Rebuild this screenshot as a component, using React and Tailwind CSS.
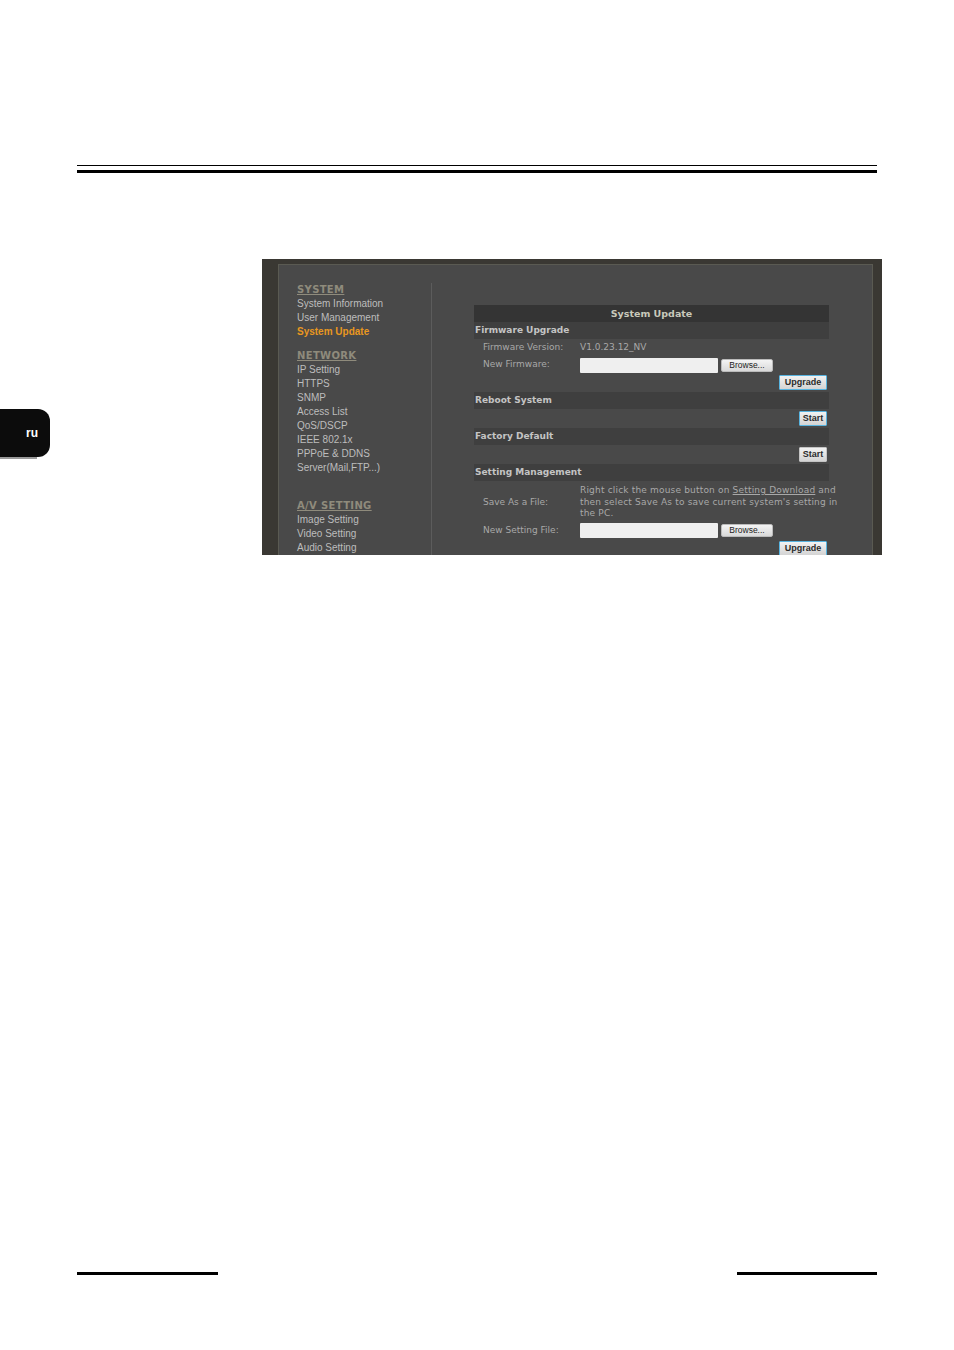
import React from "react";

const navFont = "font-['Liberation_Sans',Arial,sans-serif]";
const tableFont = "font-['DejaVu_Sans',Verdana,sans-serif]";

const NavHeading = ({ children, className = "" }) => (
  <div className={`h-[14px] text-[10px] leading-[14px] font-bold tracking-[0.35px] underline text-[#8f8b7c] ${tableFont} ${className}`}>
    {children}
  </div>
);

const NavItem = ({ children, active }) => (
  <div className={`h-[14px] text-[10px] leading-[14px] ${navFont} ${active ? "font-bold text-[#e8971f]" : "text-[#bdbdbd]"}`}>
    {children}
  </div>
);

const SectionRow = ({ children }) => (
  <div className={`h-[17px] bg-[#3f3f3f] pl-px text-[9px] leading-[17px] font-bold text-[#c4c4c4] ${tableFont}`}>
    {children}
  </div>
);

const FormRow = ({ label, children, className = "" }) => (
  <div className={`flex items-center text-[9px] text-[#a8a8a8] ${tableFont} ${className}`}>
    <div className="w-[106px] pl-[9px] shrink-0">{label}</div>
    {children}
  </div>
);

const FileInput = () => (
  <div className="flex items-center">
    <div className="w-[138px] h-[15px] bg-[#efefef] rounded-[1px]" />
    <div className={`ml-[3px] w-[52px] h-[13px] bg-gradient-to-b from-[#f4f4f4] to-[#d9d9d9] border border-[#bbbbbb] rounded-[2px] text-center text-[8.5px] leading-[11px] text-[#222] ${navFont}`}>
      Browse...
    </div>
  </div>
);

const ActionButton = ({ label, width, focused }) => (
  <div
    className={`${width} h-[15px] bg-gradient-to-b from-[#f2f2f2] to-[#d4d4d4] rounded-[1px] border text-center text-[9px] leading-[13px] font-bold text-[#2b2b2b] ${navFont} ${
      focused ? "border-[#58b4e0]" : "border-[#c4c4c4]"
    }`}
  >
    {label}
  </div>
);

const ButtonRow = ({ height, children }) => (
  <div className={`${height} flex justify-end items-center pr-[2px]`}>{children}</div>
);

const Sidebar = () => (
  <div className="w-[153px] shrink-0 border-r border-[#5c5c5c] pl-[18px] pt-[-1px] h-full">
    <NavHeading>SYSTEM</NavHeading>
    <NavItem>System Information</NavItem>
    <NavItem>User Management</NavItem>
    <NavItem active>System Update</NavItem>
    <NavHeading className="mt-[10px]">NETWORK</NavHeading>
    <NavItem>IP Setting</NavItem>
    <NavItem>HTTPS</NavItem>
    <NavItem>SNMP</NavItem>
    <NavItem>Access List</NavItem>
    <NavItem>QoS/DSCP</NavItem>
    <NavItem>IEEE 802.1x</NavItem>
    <NavItem>PPPoE &amp; DDNS</NavItem>
    <NavItem>Server(Mail,FTP...)</NavItem>
    <NavHeading className="mt-[24px]">A/V SETTING</NavHeading>
    <NavItem>Image Setting</NavItem>
    <NavItem>Video Setting</NavItem>
    <NavItem>Audio Setting</NavItem>
  </div>
);

const UpdateTable = () => (
  <div className="w-[355px] ml-[42px] mt-[22px] shrink-0">
    <div className={`h-[17px] bg-[#343434] text-center pl-[0px] text-[9.5px] leading-[17px] font-bold text-[#c9c9bb] ${tableFont}`}>
      System Update
    </div>
    <SectionRow>Firmware Upgrade</SectionRow>
    <FormRow label="Firmware Version:" className="h-[18px]">
      <span>V1.0.23.12_NV</span>
    </FormRow>
    <FormRow label="New Firmware:" className="h-[16px]">
      <FileInput />
    </FormRow>
    <ButtonRow height="h-[19px]">
      <ActionButton label="Upgrade" width="w-[48px]" focused />
    </ButtonRow>
    <SectionRow>Reboot System</SectionRow>
    <ButtonRow height="h-[19px]">
      <ActionButton label="Start" width="w-[28px]" focused />
    </ButtonRow>
    <SectionRow>Factory Default</SectionRow>
    <ButtonRow height="h-[19px]">
      <ActionButton label="Start" width="w-[28px]" />
    </ButtonRow>
    <SectionRow>Setting Management</SectionRow>
    <FormRow label="Save As a File:" className="h-[41px] pt-[2px]">
      <p className="w-[249px] leading-[11.7px] tracking-[0.02em] whitespace-nowrap">
        Right click the mouse button on <span className="underline">Setting Download</span> and
        <br />
        then select Save As to save current system's setting in
        <br />
        the PC.
      </p>
    </FormRow>
    <FormRow label="New Setting File:" className="h-[17px]">
      <FileInput />
    </FormRow>
    <ButtonRow height="h-[19px]">
      <ActionButton label="Upgrade" width="w-[48px]" focused />
    </ButtonRow>
  </div>
);

export default function App() {
  return (
    <div className="w-[954px] h-[1350px] bg-white overflow-hidden">
      <div className="pt-[165px] px-[77px]">
        <div className="h-px bg-black" />
        <div className="mt-[4px] h-[3px] bg-black" />
      </div>

      <div className="mt-[86px] flex">
        <div className="w-[262px] shrink-0">
          <div className="mt-[150px] w-[50px] h-[48px] bg-[#0c0c0c] rounded-r-[12px] flex items-center justify-end pr-[12px] text-white text-[12px] font-bold font-['Liberation_Sans',Arial,sans-serif]">
            ru
          </div>
          <div className="w-[37px] h-[2px] bg-[#9a9a9a]" />
        </div>

        <div className="w-[620px] h-[296px] bg-[#3a3833] pt-[5px] px-[16px] pr-[9px] overflow-hidden">
          <div className="h-[320px] bg-[#494949] border-l border-t border-r border-[#5a5a52] flex pt-[18px]">
            <Sidebar />
            <UpdateTable />
          </div>
        </div>
      </div>

      <div className="mt-[717px] px-[77px] flex justify-between">
        <div className="w-[141px] h-[3px] bg-black" />
        <div className="w-[140px] h-[3px] bg-black" />
      </div>
    </div>
  );
}
